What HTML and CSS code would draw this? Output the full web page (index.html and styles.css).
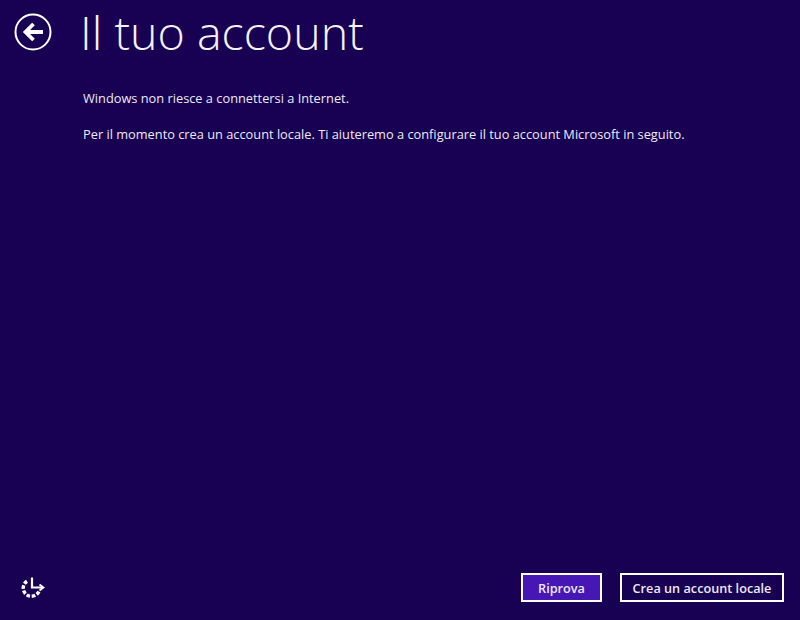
FILE: index.html
```html
<!DOCTYPE html>
<html lang="it">
<head>
<meta charset="utf-8">
<title>Il tuo account</title>
<link rel="stylesheet" href="styles.css">
</head>
<body>
<main class="screen">
  <header class="head">
    <svg class="back" width="38" height="38" viewBox="0 0 38 38" aria-hidden="true">
      <circle cx="19" cy="19" r="17.5" fill="none" stroke="#fff" stroke-width="2"/>
      <path d="M12 19H29" stroke="#fff" stroke-width="4" fill="none"/>
      <path d="M19.5 11L11.5 19L19.5 27" stroke="#fff" stroke-width="3.8" fill="none"/>
    </svg>
    <h1 class="title">Il tuo account</h1>
  </header>
  <section class="body">
    <p class="line">Windows non riesce a connettersi a Internet.</p>
    <p class="line">Per il momento crea un account locale. Ti aiuteremo a configurare il tuo account Microsoft in seguito.</p>
  </section>
  <footer class="foot">
    <svg class="ease" width="26" height="26" viewBox="0 0 26 26" aria-hidden="true">
      <path d="M8 6.2A8.2 8.2 0 1 0 20.4 15" fill="none" stroke="#fff" stroke-width="3.4" stroke-dasharray="3.6 1.7"/>
      <path d="M13 2.5V12.5H23" fill="none" stroke="#fff" stroke-width="2.2"/>
      <path d="M20.5 9.5L24.5 12.5L20.5 15.5" fill="none" stroke="#fff" stroke-width="1.8"/>
    </svg>
    <div class="actions">
      <button class="btn primary" type="button">Riprova</button>
      <button class="btn wide" type="button">Crea un account locale</button>
    </div>
  </footer>
</main>
</body>
</html>
```
FILE: styles.css
```css
* { box-sizing: border-box; }
html, body { margin: 0; height: 100%; }
body { background: #180052; color: #fff; font-family: "Open Sans", "Noto Sans", sans-serif; overflow: hidden; }
.screen { width: 800px; height: 620px; display: flex; flex-direction: column; padding: 0 16px 18px 14px; }
.head { display: flex; align-items: center; gap: 28px; height: 64px; }
.back { flex: none; }
.title { margin: 0; font-family: "Open Sans", sans-serif; font-weight: 300; font-size: 46.6px; line-height: 64px; color: #f4f2f8; }
.body { flex: 1; padding: 25px 0 0 69px; }
.line { margin: 0 0 18px; font-size: 12.8px; line-height: 18px; color: #eeeaf5; }
.foot { display: flex; align-items: center; justify-content: space-between; }
.ease { margin-left: 5px; }
.actions { display: flex; gap: 18px; }
.btn { height: 29px; border: 2px solid #fff; background: transparent; color: #eeeaf5; font-family: "Open Sans", sans-serif; font-size: 12.7px; font-weight: 600; padding: 1px 0 0; }
.primary { width: 81px; background: #4617b4; }
.wide { width: 164px; }
```
